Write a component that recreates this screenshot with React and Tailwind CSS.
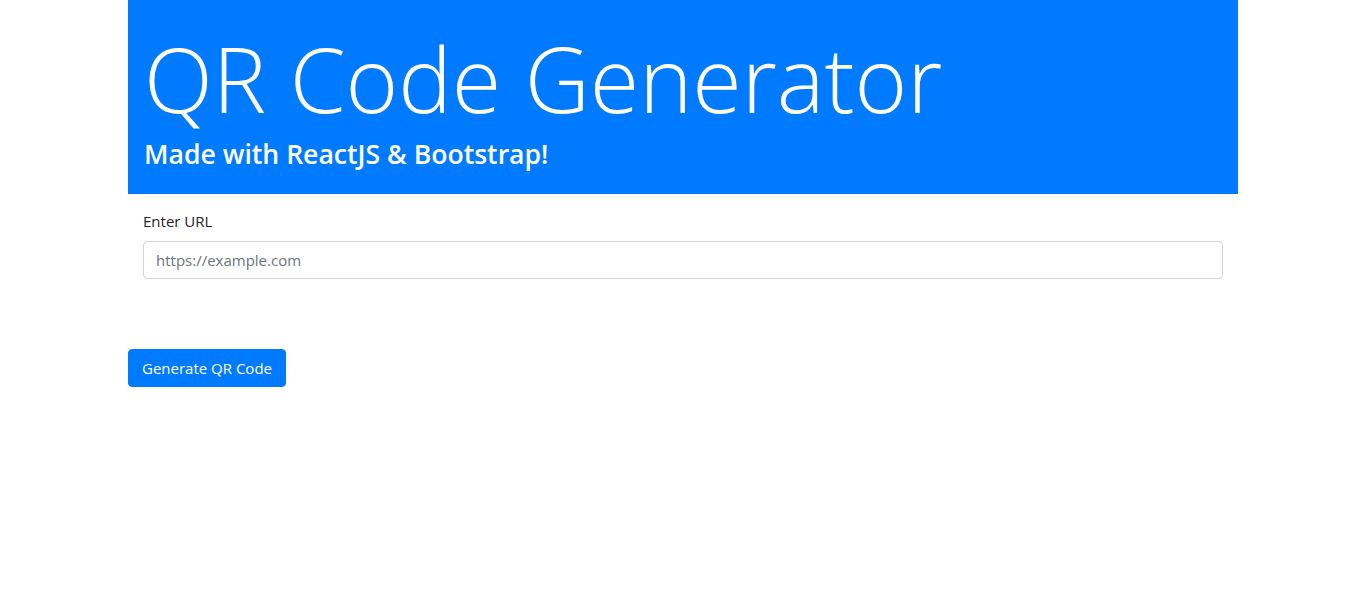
export default function App() {
  return (
    <div className="min-h-screen bg-white text-[#212529] font-['Open_Sans',sans-serif]">
      <div className="mx-auto w-[1110px]">
        <div className="h-[194px] bg-[#007bff] px-4 pt-6 text-white">
          <h1 className="h-[108px] text-[90px] font-light leading-[108px]">QR Code Generator</h1>
          <h3 className="mt-[6px] text-[26.6px] font-semibold leading-[32px]">Made with ReactJS &amp; Bootstrap!</h3>
        </div>

        <div className="px-[15px] pt-[15px]">
          <label className="mb-2 block text-[15px] leading-6">Enter URL</label>
          <input
            type="text"
            placeholder="https://example.com"
            className="block h-[38px] w-full rounded border border-[#ced4da] px-3 text-[15px] text-[#495057] placeholder:text-[#6c757d] outline-none"
          />
        </div>

        <div className="mt-[70px]">
          <button className="h-[38px] rounded border border-[#007bff] bg-[#007bff] px-[13px] text-[15px] leading-6 text-white">
            Generate QR Code
          </button>
        </div>
      </div>
    </div>
  );
}
